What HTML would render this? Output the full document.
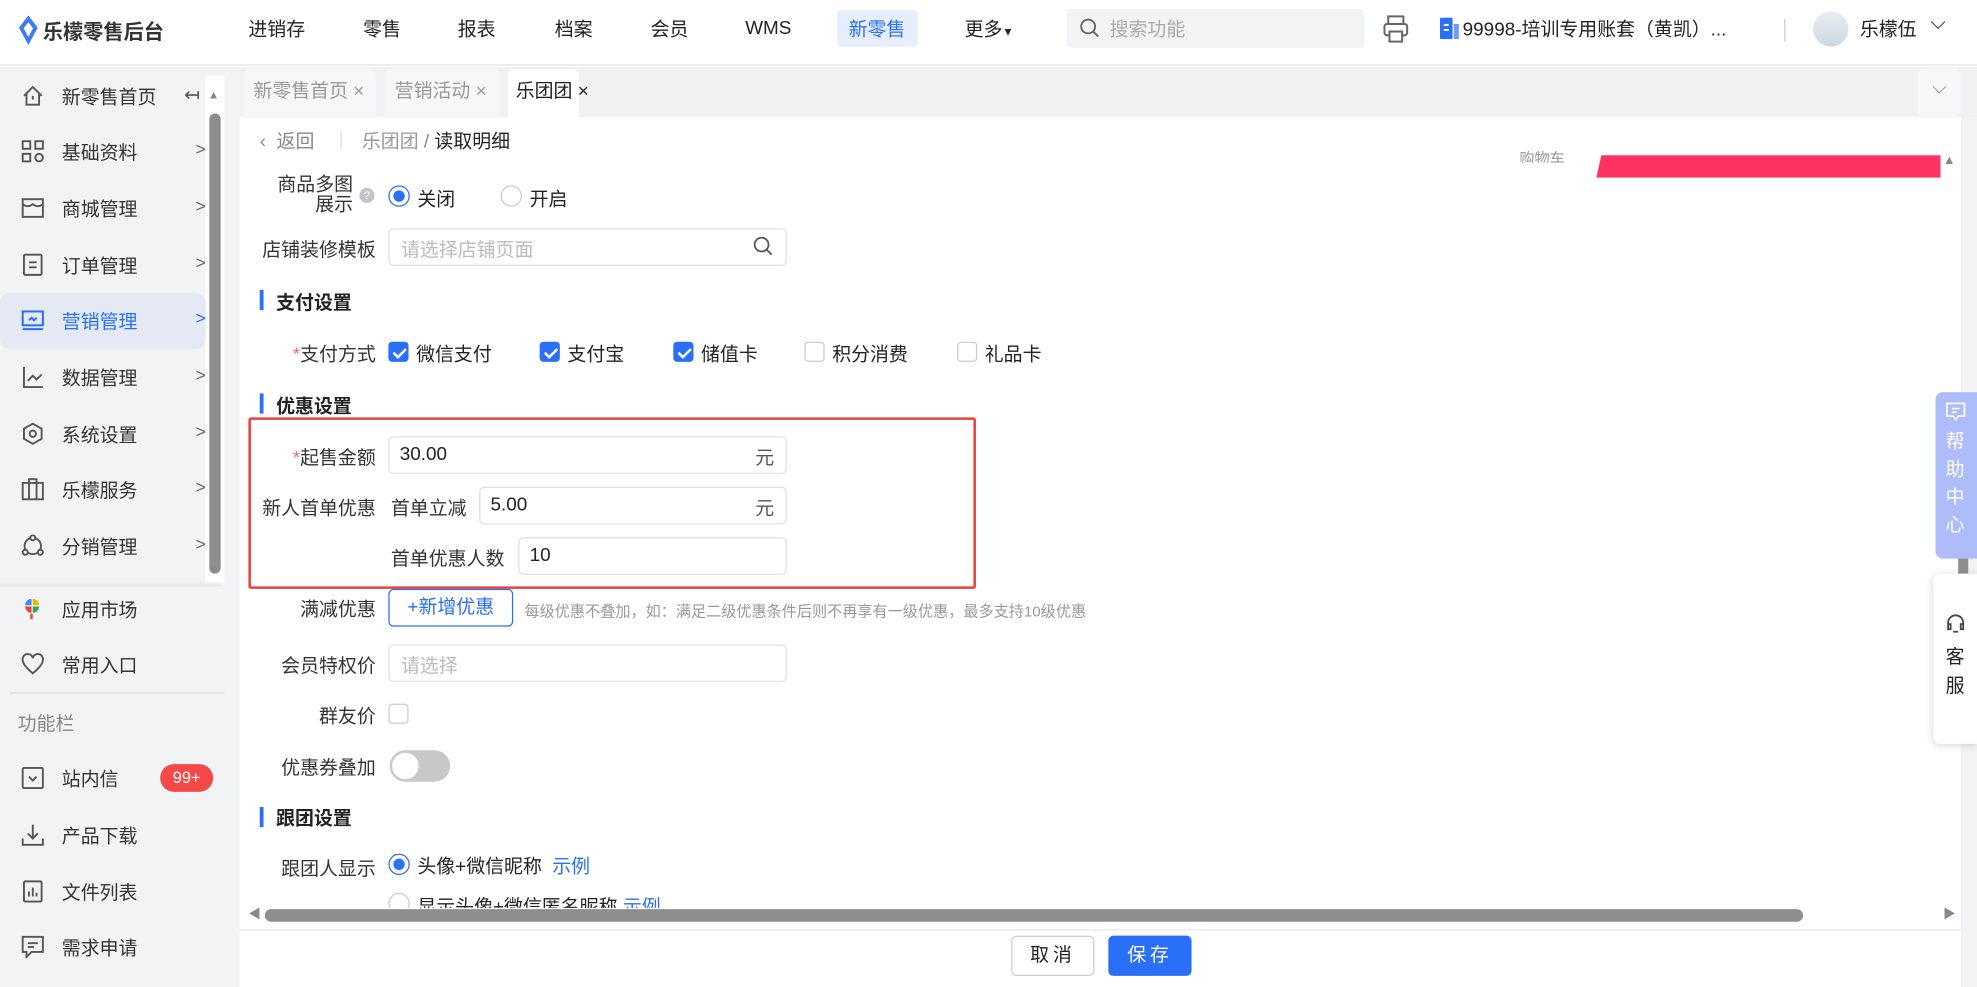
<!DOCTYPE html>
<html><head><meta charset="utf-8"><style>
*{box-sizing:border-box;margin:0;padding:0}
html,body{width:1977px;height:987px;overflow:hidden;background:#fff}
#w{position:absolute;left:0;top:0;width:1568px;height:783px;transform:scale(1.2609);transform-origin:0 0;font-family:"Liberation Sans","Noto Sans CJK SC",sans-serif;color:#222;font-size:15px}
.a{position:absolute;white-space:nowrap}
.nav{top:12px;font-size:15px;color:#222}
.mi{left:49px;font-size:15px;color:#333}
.ic{left:17px;width:18px;height:18px}
.chev{left:155px;color:#666;font-size:14px}
.lbl{right:1270px;font-size:15px;color:#333;text-align:right}
.inp{border:1px solid #dcdfe6;border-radius:4px;background:#fff}
.sec{font-weight:bold;font-size:15px;color:#222}
.bar{width:3px;height:16px;background:#2a6ff7}
.cb{width:16px;height:16px;border-radius:3px;border:1px solid #ccc;background:#fff}
.cbk{background:#2a6ff7;border-color:#2a6ff7}
.cbk:after{content:"";position:absolute;left:5px;top:2px;width:4px;height:8px;border:solid #fff;border-width:0 2px 2px 0;transform:rotate(45deg)}
</style></head><body><div id="w">
<!-- top bar -->
<div class="a" style="left:0;top:0;width:1568px;height:52px;background:#fff;border-bottom:1px solid #e4e4e4"></div>
<svg class="a" style="left:14px;top:12px" width="17" height="24" viewBox="0 0 16 22"><path d="M8 0 L15 9 L8 22 L1 9Z" fill="#3b7bf7"/><path d="M8 5 L11.5 9.5 L8 16 L4.5 9.5Z" fill="#fff"/></svg>
<div class="a" style="left:34px;top:12px;font-size:16px;font-weight:bold;color:#333">乐檬零售后台</div>
<div class="a nav" style="left:197px">进销存</div>
<div class="a nav" style="left:288px">零售</div>
<div class="a nav" style="left:363px">报表</div>
<div class="a nav" style="left:440px">档案</div>
<div class="a nav" style="left:516px">会员</div>
<div class="a nav" style="left:591px;top:14px">WMS</div>
<div class="a" style="left:664px;top:8px;width:64px;height:29px;background:#e6eefd;border-radius:3px"></div>
<div class="a nav" style="left:673px;color:#2a6ff7">新零售</div>
<div class="a nav" style="left:765px">更多<span style="font-size:9px">▼</span></div>
<div class="a" style="left:846px;top:7px;width:236px;height:31px;background:#f2f3f5;border-radius:4px"></div>
<svg class="a" style="left:856px;top:14px" width="17" height="17" viewBox="0 0 17 17"><circle cx="7" cy="7" r="5.5" fill="none" stroke="#666" stroke-width="1.5"/><path d="M11 11l4 4" stroke="#666" stroke-width="1.5"/></svg>
<div class="a" style="left:880px;top:12px;font-size:15px;color:#aaa">搜索功能</div>
<svg class="a" style="left:1097px;top:12px" width="20" height="22" viewBox="0 0 20 22"><rect x="4" y="1" width="12" height="6" fill="none" stroke="#666" stroke-width="1.6"/><rect x="1" y="7" width="18" height="9" rx="2" fill="none" stroke="#666" stroke-width="1.6"/><rect x="5" y="13" width="10" height="8" fill="#fff" stroke="#666" stroke-width="1.6"/></svg>
<svg class="a" style="left:1142px;top:14px" width="16" height="17" viewBox="0 0 16 17"><rect x="0" y="0" width="10" height="17" rx="1" fill="#2a6ff7"/><rect x="11" y="5" width="4" height="12" fill="#6f9cf9"/><rect x="3" y="5" width="4" height="1.5" fill="#fff"/><rect x="3" y="9" width="4" height="1.5" fill="#fff"/></svg>
<div class="a" style="left:1160px;top:12px;font-size:15px;color:#222">99998-培训专用账套（黄凯）...</div>
<div class="a" style="left:1415px;top:15px;width:1px;height:18px;background:#ccc"></div>
<div class="a" style="left:1438px;top:9px;width:28px;height:28px;border-radius:50%;background:linear-gradient(#e8edf2,#cdd8e2)"></div>
<div class="a" style="left:1475px;top:12px;font-size:15px;color:#222">乐檬伍</div>
<div class="a" style="left:1531px;top:10px;font-size:16px;color:#222">⌵</div>

<!-- sidebar -->
<div class="a" style="left:0;top:53px;width:190px;height:730px;background:#f2f3f5"></div>
<div class="a" style="left:163px;top:60px;width:15px;height:402px;background:#fff"></div>
<div class="a" style="left:165px;top:70px;color:#888;font-size:9px">▲</div>
<div class="a" style="left:166px;top:90px;width:9px;height:365px;background:#8e8e8e;border-radius:5px"></div>
<div class="a" style="left:165px;top:447px;color:#888;font-size:9px">▼</div>
<div class="a" style="left:0;top:461px;width:175px;height:4px;background:linear-gradient(#fff0,#e6e6e6)"></div>
<div class="a" style="left:0;top:232px;width:163px;height:45px;background:#e5e9f4;border-radius:8px"></div>
<svg class="a ic" style="top:67px" viewBox="0 0 18 18"><path d="M2 9L9 2l7 7M4 7v9h10V7M9 9v3" fill="none" stroke="#555" stroke-width="1.5"/></svg>
<div class="a mi" style="top:66px">新零售首页</div><div class="a" style="left:146px;top:66px;color:#555;font-size:15px">↤</div>
<svg class="a ic" style="top:111px" viewBox="0 0 18 18"><g fill="none" stroke="#555" stroke-width="1.5"><rect x="1" y="1" width="6" height="6"/><rect x="11" y="1" width="6" height="6"/><rect x="1" y="11" width="6" height="6"/><circle cx="14" cy="14" r="3"/></g></svg>
<div class="a mi" style="top:110px">基础资料</div><div class="a chev" style="top:110px">&gt;</div>
<svg class="a ic" style="top:156px" viewBox="0 0 18 18"><g fill="none" stroke="#555" stroke-width="1.5"><rect x="1" y="2" width="16" height="14"/><path d="M1 6q4 3 8 0q4 3 8 0"/></g></svg>
<div class="a mi" style="top:155px">商城管理</div><div class="a chev" style="top:155px">&gt;</div>
<svg class="a ic" style="top:201px" viewBox="0 0 18 18"><g fill="none" stroke="#555" stroke-width="1.5"><rect x="2" y="1" width="14" height="16" rx="1"/><path d="M6 7h6M6 11h6"/></g></svg>
<div class="a mi" style="top:200px">订单管理</div><div class="a chev" style="top:200px">&gt;</div>
<svg class="a ic" style="top:245px" viewBox="0 0 18 18"><g fill="none" stroke="#2a6ff7" stroke-width="1.6"><rect x="1" y="2" width="16" height="11"/><path d="M1 16h16M6 9l2-2 2 2 2-2"/></g></svg>
<div class="a mi" style="top:244px;color:#2a6ff7">营销管理</div><div class="a chev" style="top:244px;color:#2a6ff7">&gt;</div>
<svg class="a ic" style="top:290px" viewBox="0 0 18 18"><path d="M2 1v16h15M5 12l4-4 3 3 4-4" fill="none" stroke="#555" stroke-width="1.5"/></svg>
<div class="a mi" style="top:289px">数据管理</div><div class="a chev" style="top:289px">&gt;</div>
<svg class="a ic" style="top:335px" viewBox="0 0 18 18"><g fill="none" stroke="#555" stroke-width="1.5"><path d="M9 1l7 4v8l-7 4-7-4V5z"/><circle cx="9" cy="9" r="2.5"/></g></svg>
<div class="a mi" style="top:334px">系统设置</div><div class="a chev" style="top:334px">&gt;</div>
<svg class="a ic" style="top:379px" viewBox="0 0 18 18"><g fill="none" stroke="#555" stroke-width="1.5"><rect x="1" y="4" width="16" height="13"/><path d="M6 4V1h6v3M6 4v13M12 4v13"/></g></svg>
<div class="a mi" style="top:378px">乐檬服务</div><div class="a chev" style="top:378px">&gt;</div>
<svg class="a ic" style="top:424px" viewBox="0 0 18 18"><g fill="none" stroke="#555" stroke-width="1.5"><circle cx="9" cy="9" r="6.5"/><circle cx="9" cy="2.5" r="2" fill="#f2f3f5"/><circle cx="3" cy="14" r="2" fill="#f2f3f5"/><circle cx="15" cy="14" r="2" fill="#f2f3f5"/></g></svg>
<div class="a mi" style="top:423px">分销管理</div><div class="a chev" style="top:423px">&gt;</div>
<svg class="a ic" style="top:474px" viewBox="0 0 18 18"><path d="M9 1a5 5 0 0 1 5 5H9z" fill="#f5b400"/><path d="M14 7a5 5 0 0 1-5 5V7z" fill="#34a853"/><path d="M8 12a5 5 0 0 1-5-5h5z" fill="#ea4335"/><path d="M3 6a5 5 0 0 1 5-5v5z" fill="#4285f4"/><path d="M8 13v4" stroke="#ea4335" stroke-width="2"/></svg>
<div class="a mi" style="top:473px">应用市场</div>
<svg class="a ic" style="top:518px" viewBox="0 0 18 18"><path d="M9 16C3 11 1 8 1 5.5A4 4 0 0 1 9 4a4 4 0 0 1 8 1.5C17 8 15 11 9 16z" fill="none" stroke="#555" stroke-width="1.5"/></svg>
<div class="a mi" style="top:517px">常用入口</div>
<div class="a" style="left:8px;top:549px;width:170px;height:1px;background:#dcdcdc"></div>
<div class="a" style="left:14px;top:563px;font-size:15px;color:#888">功能栏</div>
<svg class="a ic" style="top:608px" viewBox="0 0 18 18"><g fill="none" stroke="#555" stroke-width="1.5"><rect x="1" y="1" width="16" height="16" rx="1"/><path d="M6 8l3 3 3-3"/></g></svg>
<div class="a mi" style="top:607px">站内信</div>
<div class="a" style="left:127px;top:606px;width:42px;height:22px;border-radius:11px;background:#f74848;color:#fff;font-size:13px;text-align:center;line-height:22px">99+</div>
<svg class="a ic" style="top:653px" viewBox="0 0 18 18"><path d="M9 1v11M5 8l4 4 4-4M1 12v5h16v-5" fill="none" stroke="#555" stroke-width="1.5"/></svg>
<div class="a mi" style="top:652px">产品下载</div>
<svg class="a ic" style="top:698px" viewBox="0 0 18 18"><g fill="none" stroke="#555" stroke-width="1.5"><rect x="2" y="1" width="14" height="16" rx="1"/><path d="M6 13V9M9 13V6M12 13v-3"/></g></svg>
<div class="a mi" style="top:697px">文件列表</div>
<svg class="a ic" style="top:742px" viewBox="0 0 18 18"><g fill="none" stroke="#555" stroke-width="1.5"><path d="M1 1h16v12H8l-4 4v-4H1z"/><path d="M5 6h8M5 9h5"/></g></svg>
<div class="a mi" style="top:741px">需求申请</div>

<!-- tabs -->
<div class="a" style="left:190px;top:53px;width:1378px;height:40px;background:#f0f1f3"></div>
<div class="a" style="left:193px;top:55px;width:105px;height:37px;background:#f7f7f7;border-radius:4px 4px 0 0;color:#999;font-size:15px;padding:6px 0 0 8px">新零售首页 ×</div>
<div class="a" style="left:305px;top:55px;width:91px;height:37px;background:#f7f7f7;border-radius:4px 4px 0 0;color:#999;font-size:15px;padding:6px 0 0 8px">营销活动 ×</div>
<div class="a" style="left:403px;top:55px;width:56px;height:38px;background:#fff;border-radius:4px 4px 0 0;color:#222;font-size:15px;padding:6px 0 0 6px">乐团团 ×</div>
<div class="a" style="left:1521px;top:55px;width:34px;height:37px;background:#f7f7f7;border-radius:4px;color:#888;font-size:15px;text-align:center;padding-top:6px">⌵</div>

<!-- content -->
<div class="a" style="left:190px;top:93px;width:1365px;height:690px;background:#fff"></div>
<div class="a" style="left:1555px;top:93px;width:13px;height:690px;background:#f2f3f5"></div>
<div class="a" style="left:206px;top:101px;font-size:15px;color:#888">‹ &nbsp;返回</div>
<div class="a" style="left:270px;top:104px;width:1px;height:14px;background:#ddd"></div>
<div class="a" style="left:287px;top:101px;font-size:15px;color:#999">乐团团 <span style="color:#888">/</span> <span style="color:#222">读取明细</span></div>
<div class="a" style="left:1205px;top:117px;font-size:12px;color:#999;height:12px;overflow:hidden;line-height:18px">购物车</div>
<div class="a" style="left:1266px;top:123px;width:273px;height:18px;background:#fe3361;clip-path:polygon(4px 0,100% 0,100% 100%,0 100%)"></div>
<div class="a" style="left:1541px;top:122px;color:#888;font-size:10px">▲</div>
<div class="a" style="left:1541px;top:716px;color:#888;font-size:10px">▶</div>
<div class="a" style="left:197px;top:716px;color:#888;font-size:10px">◀</div>
<div class="a" style="left:210px;top:721px;width:1220px;height:10px;background:#8e8e8e;border-radius:5px"></div>

<!-- form -->
<div class="a" style="left:220px;top:139px;font-size:15px;color:#333;line-height:16px;text-align:right">商品多图<br>展示</div>
<div class="a" style="left:285px;top:149px;width:12px;height:12px;border-radius:50%;background:#c0c4cc;color:#fff;font-size:9px;text-align:center;line-height:12px">?</div>
<div class="a" style="left:308px;top:147px;width:17px;height:17px;border-radius:50%;border:1px solid #2a6ff7"><div style="margin:3px;width:9px;height:9px;border-radius:50%;background:#2a6ff7"></div></div>
<div class="a" style="left:331px;top:147px">关闭</div>
<div class="a" style="left:397px;top:147px;width:17px;height:17px;border-radius:50%;border:1px solid #ccc"></div>
<div class="a" style="left:420px;top:147px">开启</div>
<div class="a lbl" style="top:187px">店铺装修模板</div>
<div class="a inp" style="left:308px;top:181px;width:316px;height:30px"></div>
<div class="a" style="left:318px;top:187px;color:#bbb">请选择店铺页面</div>
<svg class="a" style="left:597px;top:187px" width="17" height="17" viewBox="0 0 17 17"><circle cx="7" cy="7" r="5.5" fill="none" stroke="#555" stroke-width="1.4"/><path d="M11 11l4 4" stroke="#555" stroke-width="1.4"/></svg>

<div class="a bar" style="left:206px;top:230px"></div><div class="a sec" style="left:219px;top:229px">支付设置</div>
<div class="a lbl" style="top:270px"><span style="color:#f56c6c">*</span>支付方式</div>
<div class="a cb cbk" style="left:308px;top:271px"></div><div class="a" style="left:330px;top:270px">微信支付</div>
<div class="a cb cbk" style="left:428px;top:271px"></div><div class="a" style="left:450px;top:270px">支付宝</div>
<div class="a cb cbk" style="left:534px;top:271px"></div><div class="a" style="left:556px;top:270px">储值卡</div>
<div class="a cb" style="left:638px;top:271px"></div><div class="a" style="left:660px;top:270px">积分消费</div>
<div class="a cb" style="left:759px;top:271px"></div><div class="a" style="left:781px;top:270px">礼品卡</div>

<div class="a bar" style="left:206px;top:312px"></div><div class="a sec" style="left:219px;top:311px">优惠设置</div>
<div class="a" style="left:197px;top:331px;width:577px;height:136px;border:2px solid #e8403b;border-radius:2px"></div>
<div class="a lbl" style="top:352px"><span style="color:#f56c6c">*</span>起售金额</div>
<div class="a inp" style="left:308px;top:346px;width:316px;height:30px"></div>
<div class="a" style="left:317px;top:352px">30.00</div><div class="a" style="left:599px;top:352px;color:#555">元</div>
<div class="a lbl" style="top:392px">新人首单优惠</div>
<div class="a" style="left:310px;top:392px;color:#333">首单立减</div>
<div class="a inp" style="left:380px;top:386px;width:244px;height:30px"></div>
<div class="a" style="left:389px;top:392px">5.00</div><div class="a" style="left:599px;top:392px;color:#555">元</div>
<div class="a" style="left:310px;top:432px;color:#333">首单优惠人数</div>
<div class="a inp" style="left:411px;top:426px;width:213px;height:30px"></div>
<div class="a" style="left:420px;top:432px">10</div>

<div class="a lbl" style="top:472px">满减优惠</div>
<div class="a" style="left:308px;top:467px;width:99px;height:30px;border:1px solid #2a6ff7;border-radius:4px;color:#2a6ff7;text-align:center;line-height:28px">+新增优惠</div>
<div class="a" style="left:416px;top:476px;font-size:12px;color:#999">每级优惠不叠加，如：满足二级优惠条件后则不再享有一级优惠，最多支持10级优惠</div>
<div class="a lbl" style="top:517px">会员特权价</div>
<div class="a inp" style="left:308px;top:511px;width:316px;height:30px"></div>
<div class="a" style="left:318px;top:517px;color:#bbb">请选择</div>
<div class="a lbl" style="top:557px">群友价</div>
<div class="a cb" style="left:308px;top:558px"></div>
<div class="a lbl" style="top:598px">优惠券叠加</div>
<div class="a" style="left:309px;top:595px;width:48px;height:25px;border-radius:13px;background:#c8c8c8"><div style="margin:2px;width:21px;height:21px;border-radius:50%;background:#fff"></div></div>

<div class="a bar" style="left:206px;top:640px"></div><div class="a sec" style="left:219px;top:638px">跟团设置</div>
<div class="a lbl" style="top:678px">跟团人显示</div>
<div class="a" style="left:308px;top:677px;width:17px;height:17px;border-radius:50%;border:1px solid #2a6ff7"><div style="margin:3px;width:9px;height:9px;border-radius:50%;background:#2a6ff7"></div></div>
<div class="a" style="left:331px;top:676px">头像+微信昵称 <span style="color:#2a6ff7;margin-left:4px">示例</span></div>
<div class="a" style="left:308px;top:708px;height:12px;overflow:hidden;width:260px"><div style="width:17px;height:17px;border-radius:50%;border:1px solid #ccc;position:absolute"></div><div style="position:absolute;left:23px;top:0">显示头像+微信匿名昵称 <span style="color:#2a6ff7">示例</span></div></div>

<!-- footer -->
<div class="a" style="left:190px;top:737px;width:1365px;height:46px;background:#fff;border-top:1px solid #e6e6e6"></div>
<div class="a" style="left:802px;top:742px;width:66px;height:32px;border:1px solid #ccc;border-radius:4px;text-align:center;line-height:30px;font-size:15px;letter-spacing:3px">取消</div>
<div class="a" style="left:879px;top:742px;width:66px;height:32px;background:#2a6ff7;border-radius:4px;color:#fff;text-align:center;line-height:32px;font-size:15px;letter-spacing:3px">保存</div>

<!-- right float -->
<div class="a" style="left:1535px;top:311px;width:33px;height:132px;background:#aebcf9;border-radius:6px 0 0 6px"></div>
<svg class="a" style="left:1543px;top:319px" width="16" height="15" viewBox="0 0 16 15"><path d="M1 1h14v10H10l-2 3-2-3H1z M5 5h6M5 8h4" fill="none" stroke="#fff" stroke-width="1.3"/></svg>
<div class="a" style="left:1543px;top:340px;color:#fff;font-size:15px;line-height:22px;white-space:normal;width:16px">帮助中心</div>
<div class="a" style="left:1553px;top:443px;width:8px;height:12px;background:#8e8e8e"></div>
<div class="a" style="left:1533px;top:455px;width:35px;height:135px;background:#fff;border-radius:6px 0 0 6px;box-shadow:0 1px 6px rgba(0,0,0,.15)"></div>
<svg class="a" style="left:1542px;top:486px" width="18" height="18" viewBox="0 0 18 18"><path d="M3 10V8a6 6 0 0 1 12 0v2M3 9h2v4H3zM13 9h2v4h-2zM7 15h4" fill="none" stroke="#444" stroke-width="1.4"/></svg>
<div class="a" style="left:1543px;top:510px;color:#222;font-size:15px;line-height:23px;white-space:normal;width:16px">客服</div>
</div></body></html>
